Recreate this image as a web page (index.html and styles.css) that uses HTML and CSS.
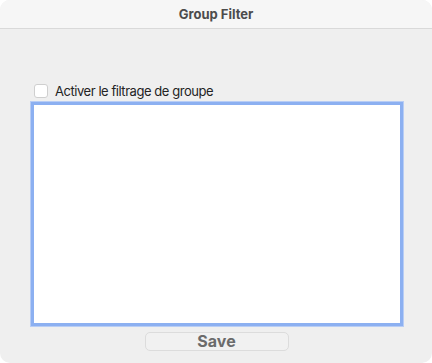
FILE: index.html
```html
<!DOCTYPE html>
<html lang="fr">
  <head>
    <meta charset="UTF-8" />
    <meta name="viewport" content="width=device-width, initial-scale=1.0" />
    <title>Group Filter</title>
    <link rel="stylesheet" href="styles.css">
  </head>
  <body>
    <div class="window">
      <div class="titlebar">Group Filter</div>

      <div class="content">
        <label class="check-row">
          <span class="checkbox"></span>
          <span>Activer le filtrage de groupe</span>
        </label>

        <div class="group-list"></div>

        <div class="actions">
          <button class="save-btn" disabled>Save</button>
        </div>
      </div>
    </div>
  </body>
</html>
```

FILE: styles.css
```css
html, body {
  margin: 0;
  padding: 0;
  background: #ffffff;
}
body {
  font-family: Inter, "Liberation Sans", Arial, sans-serif;
  color: #262626;
}
.window {
  width: 432px;
  height: 363px;
  box-sizing: border-box;
  background: #efefef;
  border-radius: 10px;
  overflow: hidden;
  display: flex;
  flex-direction: column;
}
.titlebar {
  height: 28px;
  line-height: 28px;
  background: #f6f6f6;
  border-bottom: 1px solid #d9d9d9;
  text-align: center;
  font-size: 13px;
  font-weight: 700;
  color: #4c4c4c;
}
.content {
  padding: 55px 29px 0 31px;
  display: flex;
  flex-direction: column;
}
.check-row {
  display: flex;
  align-items: center;
  height: 14px;
  margin-left: 3px;
  font-size: 13px;
  letter-spacing: -0.45px;
  color: #232323;
}
.checkbox {
  width: 14px;
  height: 14px;
  box-sizing: border-box;
  border: 1px solid #cfcfcf;
  border-radius: 3px;
  background: #ffffff;
  margin-right: 7px;
}
.group-list {
  margin-top: 4px;
  height: 224px;
  box-sizing: border-box;
  background: #ffffff;
  border: 3px solid #8cb0f1;
  box-shadow: 0 0 0 1px #b8cdf5;
}
.actions {
  display: flex;
  justify-content: center;
  margin-top: 6px;
}
.save-btn {
  width: 144px;
  height: 19px;
  box-sizing: border-box;
  margin-right: 1px;
  padding: 0;
  font-family: inherit;
  font-size: 16px;
  font-weight: 700;
  line-height: 17px;
  color: #6b6b6b;
  background: #f1f1f1;
  border: 1px solid #dcdcdc;
  border-radius: 5px;
}
```
